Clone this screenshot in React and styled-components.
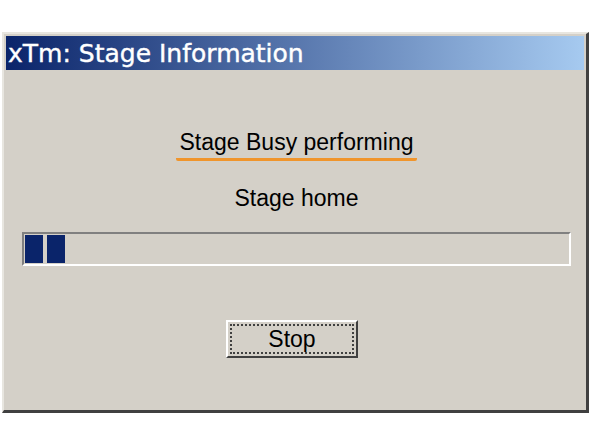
import React from 'react';
import styled, { createGlobalStyle } from 'styled-components';

const Global = createGlobalStyle`
  html, body {
    margin: 0;
    background: #ffffff;
  }
`;

const Page = styled.div`
  padding: 32px 0 0 2px;
`;

const Window = styled.div`
  width: 587px;
  height: 381px;
  box-sizing: border-box;
  background: #d4d0c8;
  border-top: 2px solid #e8e6e0;
  border-left: 2px solid #e8e6e0;
  border-right: 3px solid #404040;
  border-bottom: 3px solid #404040;
  padding: 2px;
  display: flex;
  flex-direction: column;
`;

const TitleBar = styled.div`
  height: 34px;
  background: linear-gradient(to right, #0a246a, #a6caf0);
  display: flex;
  align-items: center;
  padding-left: 2px;
  color: #ffffff;
  font-family: 'DejaVu Sans', sans-serif;
  font-size: 25px;
  -webkit-text-stroke: 0.4px #ffffff;
`;

const Body = styled.div`
  flex: 1;
  display: flex;
  flex-direction: column;
  align-items: center;
  padding: 58px 13px 0 16px;
  font-family: 'Liberation Sans', Arial, sans-serif;
  color: #000000;
`;

const Heading = styled.div`
  font-size: 23px;
  line-height: 28px;
  padding: 0 4px 2px;
  border-bottom: 3px solid #f0952c;
  border-radius: 2px;
`;

const Status = styled.div`
  font-size: 23px;
  line-height: 28px;
  margin-top: 23px;
`;

const Progress = styled.div`
  align-self: stretch;
  height: 34px;
  margin-top: 20px;
  box-sizing: border-box;
  border-top: 2px solid #808080;
  border-left: 2px solid #808080;
  border-right: 2px solid #ffffff;
  border-bottom: 2px solid #ffffff;
  padding: 1px;
  display: flex;
  gap: 4px;
`;

const Block = styled.div`
  width: 18px;
  background: #0a246a;
`;

const Button = styled.button`
  margin: 54px 9px 0 0;
  width: 132px;
  height: 38px;
  background: #d4d0c8;
  border-top: 2px solid #ffffff;
  border-left: 2px solid #ffffff;
  border-right: 2px solid #404040;
  border-bottom: 2px solid #404040;
  padding: 2px;
  font-family: 'Liberation Sans', Arial, sans-serif;
  font-size: 23px;
  color: #000000;
`;

const Focus = styled.span`
  display: flex;
  align-items: center;
  justify-content: center;
  height: 100%;
  box-sizing: border-box;
  border: 2px dotted #404040;
`;

export default function App() {
  return (
    <>
      <Global />
      <Page>
        <Window>
          <TitleBar>xTm: Stage Information</TitleBar>
          <Body>
            <Heading>Stage Busy performing</Heading>
            <Status>Stage home</Status>
            <Progress>
              <Block />
              <Block />
            </Progress>
            <Button>
              <Focus>Stop</Focus>
            </Button>
          </Body>
        </Window>
      </Page>
    </>
  );
}
